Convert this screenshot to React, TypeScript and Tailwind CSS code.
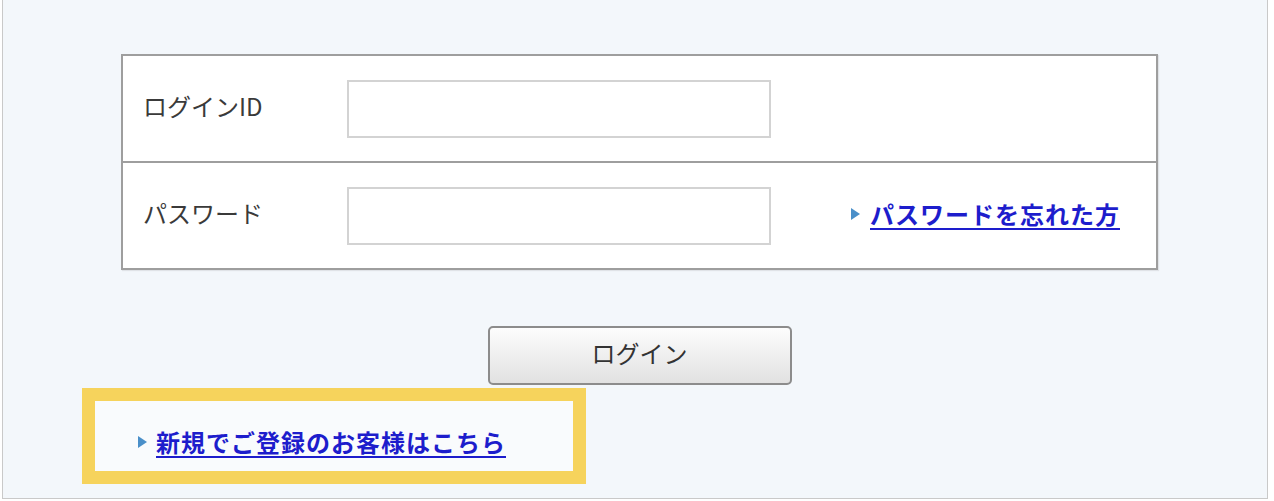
import React from 'react';

const Arrow: React.FC = () => (
  <svg width="9" height="12" viewBox="0 0 9 12" className="shrink-0">
    <path d="M0 0 L9 6 L0 12 Z" fill="#4a8fc9" />
  </svg>
);

const App: React.FC = () => {
  return (
    <div className="w-[1274px] h-[501px] bg-white font-['Noto_Sans_CJK_JP','Noto_Sans',sans-serif]">
      <div className="ml-[2px] w-[1266px] h-[499px] border-x border-b border-[#c9c9c9] bg-[#f3f7fb] pt-[54px]">
        {/* login table */}
        <div className="ml-[118px] w-[1037px] border-2 border-[#9e9e9e] bg-white shadow-[1px_1px_1px_rgba(0,0,0,0.08)]">
          <div className="h-[105px] flex items-center">
            <div className="w-[224px] pl-[20px] pb-[5px] text-[24px] leading-none text-[#3a3a3a]">ログインID</div>
            <input
              type="text"
              className="w-[424px] h-[58px] border-2 border-[#d3d3d3] bg-white outline-none"
            />
          </div>
          <div className="h-[107px] border-t-2 border-[#9e9e9e] flex items-center">
            <div className="w-[224px] pl-[20px] pb-[5px] text-[24px] leading-none text-[#3a3a3a]">パスワード</div>
            <input
              type="password"
              className="w-[424px] h-[58px] border-2 border-[#d3d3d3] bg-white outline-none"
            />
            <a href="#" className="ml-[80px] pb-[3px] flex items-center gap-[10px]">
              <Arrow />
              <span className="text-[24px] leading-none font-semibold text-[#1d1dcc] underline decoration-2 underline-offset-4 tracking-[1px]">
                パスワードを忘れた方
              </span>
            </a>
          </div>
        </div>

        {/* login button */}
        <div className="ml-[118px] w-[1037px] mt-[56px] flex justify-center">
          <button
            type="button"
            className="w-[304px] h-[59px] pb-[5px] rounded-[5px] border-2 border-[#8c8c8c] bg-gradient-to-b from-[#fdfdfd] to-[#e1e1e1] text-[24px] text-[#333]"
          >
            ログイン
          </button>
        </div>

        {/* new registration */}
        <div className="ml-[79px] mt-[3px] w-[504px] h-[96px] border-[13px] border-[#f6d35c] bg-[#f9fbfd] pl-[43px] pt-[28px]">
          <a href="#" className="flex items-center gap-[9px]">
            <Arrow />
            <span className="text-[24px] leading-[26px] font-semibold text-[#1d1dcc] underline decoration-2 underline-offset-4 tracking-[1px]">
              新規でご登録のお客様はこちら
            </span>
          </a>
        </div>
      </div>
    </div>
  );
};

export default App;
